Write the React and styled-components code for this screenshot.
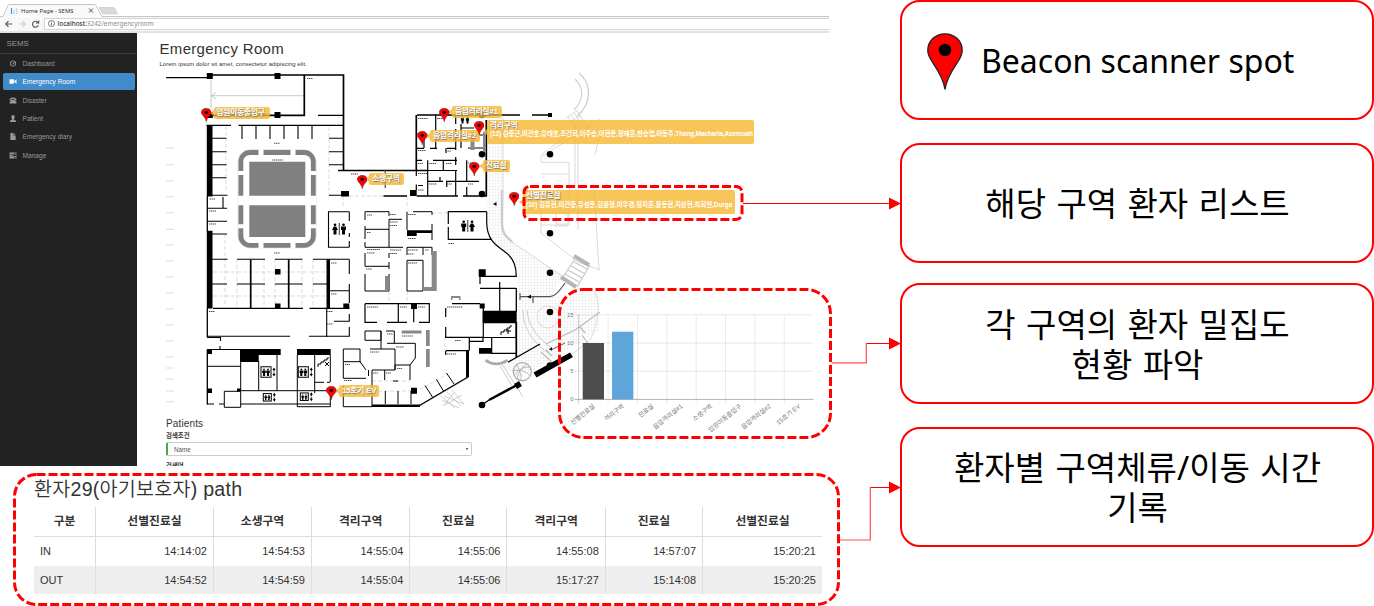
import React from "react";
import styled, { createGlobalStyle } from "styled-components";

const Global = createGlobalStyle`
  * { box-sizing: border-box; }
  body { margin: 0; background: #fff; overflow: hidden; }
`;

const SANS = `"Liberation Sans", "Noto Sans CJK KR", sans-serif`;
const UI = `"Noto Sans", "Noto Sans CJK KR", sans-serif`;

const Page = styled.div`
  position: relative;
  display: flex;
  justify-content: space-between;
  width: 1374px;
  height: 606px;
  font-family: ${SANS};
  color: #333;
  white-space: nowrap;
`;

const LeftColumn = styled.div`
  width: 840px;
`;

/* ---------- browser window ---------- */
const Browser = styled.section`
  width: 829px;
  height: 466px;
  overflow: hidden;
`;
const TabStrip = styled.div`
  height: 17px;
  svg { display: block; }
`;
const Toolbar = styled.div`
  display: flex;
  align-items: center;
  height: 16px;
  padding: 0 0 1px 4px;
  background: #f7f7f7;
  border-bottom: 2px solid #e3e3e3;
`;
const NavButtons = styled.div`
  width: 40px;
  svg { display: block; }
`;
const AddressBar = styled.div`
  display: flex;
  align-items: center;
  flex: 1;
  height: 12px;
  padding-left: 3px;
  gap: 2.5px;
  border: 1px solid #d4d4d4;
  border-right: 0;
  border-radius: 2px 0 0 2px;
  background: #fff;
  font: 6.4px/10px ${UI};
  color: #8a8a8a;
  b { font-weight: 500; color: #333; }
`;
const Body = styled.div`
  display: flex;
  height: 433px;
`;

const Sidebar = styled.nav`
  width: 137px;
  background: #222;
`;
const Brand = styled.div`
  height: 21px;
  padding: 1px 0 0 6.5px;
  border-bottom: 1px solid #3a3a3a;
  font-size: 7.8px;
  line-height: 19px;
  color: #999;
`;
const NavList = styled.div`
  display: flex;
  flex-direction: column;
  gap: 1.9px;
  padding: 1px 2px 0 2.5px;
`;
const NavItem = styled.div`
  display: flex;
  align-items: center;
  gap: 5.5px;
  height: 16.5px;
  padding-left: 6.5px;
  border-radius: 2px;
  font-size: 6.6px;
  color: ${(p) => (p.$active ? "#fff" : "#999")};
  background: ${(p) => (p.$active ? "#428bca" : "transparent")};
  svg { width: 8px; height: 7px; fill: currentColor; stroke: none; }
`;

const Main = styled.main`
  width: 692px;
  padding-left: 22.5px;
`;
const Heading = styled.h1`
  height: 26px;
  margin: 0;
  padding-top: 7px;
  font-weight: 400;
  font-size: 15px;
  line-height: 18px;
  letter-spacing: 0.32px;
`;
const Lead = styled.p`
  height: 11px;
  margin: 0;
  font-size: 5.9px;
  line-height: 11px;
  letter-spacing: 0.07px;
`;

const MapCanvas = styled.div`
  position: relative;
  height: 340px;
  margin-left: 0.5px;
`;
const Plan = styled.svg`
  display: block;
`;
const PinSpot = styled.div`
  position: absolute;
  left: ${(p) => p.$x - 160 - 5.2}px;
  top: ${(p) => p.$y - 70}px;
  line-height: 0;
`;
const ZoneTag = styled.div`
  position: absolute;
  left: ${(p) => p.$x - 160}px;
  top: ${(p) => p.$y - 70}px;
  width: ${(p) => p.$w}px;
  height: ${(p) => p.$h || 12}px;
  padding-left: 3px;
  border-radius: 2px;
  background: rgba(246, 183, 48, 0.8);
  font: 700 7.5px/11.5px ${SANS};
  color: #fff;
  text-shadow: 0.6px 0.8px 1px #777;
  &::before {
    content: "";
    position: absolute;
    left: -4px;
    top: calc(50% - 3px);
    border: solid transparent;
    border-width: 3px 4px 3px 0;
    border-right-color: rgba(246, 183, 48, 0.8);
  }
`;
const PatientNames = styled.div`
  margin-top: -2px;
  font-size: 6.5px;
  line-height: 9px;
  text-shadow: none;
  letter-spacing: ${(p) => p.$spacing}px;
`;
const ChartBox = styled.div`
  position: absolute;
  left: 398px;
  top: 218px;
  svg { display: block; }
`;

const SearchForm = styled.form`
  display: flex;
  flex-direction: column;
  width: 312.5px;
  padding: 7px 0 0 6.5px;
`;
const FormTitle = styled.h2`
  margin: 0;
  font-weight: 400;
  font-size: 10px;
  line-height: 13px;
  letter-spacing: 0.13px;
`;
const Label = styled.label`
  font: 700 6.4px/11px ${SANS};
  padding-top: ${(p) => p.$top || 0}px;
`;
const Select = styled.div`
  display: flex;
  align-items: center;
  justify-content: space-between;
  height: 14px;
  margin-top: 1px;
  padding: 0 3px 0 6px;
  border: 1px solid #ccc;
  border-left: 2px solid #3fae49;
  border-radius: 2px;
  font-size: 6.3px;
  color: #555;
`;
const Caret = styled.i`
  border: solid transparent;
  border-width: 2.5px 1.5px 0;
  border-top-color: #222;
`;

/* ---------- patient path ---------- */
const PathPanel = styled.section`
  width: 788px;
  margin: 10px 0 0 34px;
`;
const PathTitle = styled.h2`
  height: 31px;
  margin: 0;
  font-weight: 350;
  font-size: 19.6px;
  line-height: 26px;
  letter-spacing: 0.23px;
`;
const PathTable = styled.table`
  width: 788px;
  table-layout: fixed;
  border-collapse: separate;
  border-spacing: 0;
  font-size: 11px;
  th, td { padding: 0 6px; border-right: 1px solid #ddd; }
  th:last-child, td:last-child { border-right: 0; }
  th { height: 30px; padding-bottom: 5px; border-bottom: 1.5px solid #ddd; font-size: 11.8px; }
  td { height: 28.7px; text-align: right; }
  td:first-child { text-align: left; }
`;
const Row = styled.tr`
  background: ${(p) => (p.$striped ? "#eee" : "#fff")};
`;

/* ---------- callouts ---------- */
const Callouts = styled.aside`
  display: grid;
  grid-template-rows: 120px 120px 121px 120px;
  row-gap: 23px;
  width: 474px;
  align-content: start;
`;
const Callout = styled.div`
  display: flex;
  align-items: center;
  justify-content: ${(p) => (p.$left ? "flex-start" : "center")};
  gap: 18px;
  padding: 2px 0 0 ${(p) => (p.$left ? 25 : 1)}px;
  margin-top: ${(p) => p.$shift || 0}px;
  margin-bottom: ${(p) => -(p.$shift || 0)}px;
  border: 2px solid #f00;
  border-radius: 20px;
  font: 400 ${(p) => (p.$left ? 32 : 33)}px/40px ${UI};
  word-spacing: ${(p) => (p.$left ? 0 : 1.8)}px;
  text-align: center;
  color: #000;
`;
const Annotations = styled.svg`
  position: absolute;
  left: 0;
  top: 0;
  pointer-events: none;
`;

function Pin({ width = 10.5, height = 14 }) {
  return (
    <svg width={width} height={height} viewBox="0 0 36 57" preserveAspectRatio="none">
      <path d="M18 56.5C16.500 45 10 36 5 28.500C2 24 .8 21 .8 17.500C.8 8 8.500 .8 18 .8S35.200 8 35.200 17.500C35.200 21 34 24 31 28.500C26 36 19.500 45 18 56.500Z" fill="#f00" stroke="#222" strokeWidth="1.3" />
      <circle cx="18" cy="17" r="6.200" fill="#000" />
    </svg>
  );
}

function Person({ x, y, s = 1, dress }) {
  return (
    <g transform={`translate(${x} ${y}) scale(${s})`}>
      <circle cx="0" cy="-4.3" r="1.3" />
      <path d={dress ? "M-1.2-2.600H1.200L3 1H1.500V5.400H-1.500V1H-3Z" : "M-2.500-2.600H2.500V1H1.500V5.400H-1.500V1H-2.500Z"} />
    </g>
  );
}

function Lift({ x, y, w = 10, h = 10.500 }) {
  return (
    <g transform={`translate(${x} ${y})`}>
      <rect x={-w / 2} y={-h / 2} width={w} height={h} fill="#fff" stroke="#000" strokeWidth="1" />
      <Person x={-w / 5} y={0.3} s={h / 15} />
      <Person x={w / 5} y={0.3} s={h / 15} />
      <path d={`M${w / 2 + 3} -4.500l1.600 2.500h-1.100v1.500h-1v-1.500h-1.100ZM${w / 2 + 3} 4.500l1.600-2.500h-1.100v-1.500h-1v1.500h-1.100Z`} />
    </g>
  );
}

const siteTicks = [148, 164.700, 181, 196.700, 212.700, 229.300, 245, 261, 277, 293, 309, 325, 341, 357, 368, 379, 391, 401.700];

const roomCaptions = [
  [307, 78.5, 6], [274, 143.3, 6], [272, 160, 11], [351, 174, 7], [209.500, 199, 6], [209, 211, 7], [209, 224, 7],
  [274, 253, 6], [331, 263, 6], [331, 294, 6], [327, 311.500, 6], [327, 324, 6], [209, 311.500, 6],
  [367, 215, 5], [367, 232.500, 4], [367, 249.500, 13], [367, 253, 8], [366, 269, 6], [390, 214.500, 6], [390, 222, 8], [390, 225.500, 7],
  [408, 214.500, 8], [408, 238.500, 8], [390, 250, 11], [390, 253.500, 7], [408, 250, 10], [408, 254, 6], [425, 250, 4], [408, 263, 9],
  [367, 307, 11], [400, 307, 7], [418, 307, 7], [447, 307, 16], [387, 334, 6], [402, 336, 11], [396, 347, 8], [370, 352, 9],
  [447, 354, 9], [455, 340.500, 6], [345, 364.500, 5], [344, 380.500, 8], [373, 373, 5], [386, 373, 5], [397, 368.500, 5],
  [418, 118.500, 10], [437, 118.500, 7], [418, 150.500, 8], [418, 163.500, 5], [429, 163.500, 7], [446, 163.500, 6], [446, 151, 5],
  [418, 173.500, 9], [429, 184, 8], [447, 184, 5], [468, 163, 6], [468, 184, 5], [448.500, 243.500, 6], [418, 190, 6],
];

function FloorPlan() {
  return (
    <Plan width="440" height="340" viewBox="160 70 440 340">
      <defs>
        <pattern id="paving" width="3" height="3" patternUnits="userSpaceOnUse">
          <path d="M0 0H3M0 0V3" stroke="#e2e2e2" strokeWidth=".7" fill="none" />
        </pattern>
      </defs>

      {/* paving and outdoor area */}
      <path d="M487 118H503V225Q504 236 514 243L563 275L552 296L600 290V330L520 378L500 365L517 355V277Q516 264 506 254Q487 240 487 226Z" fill="url(#paving)" />
      <g fill="none" stroke="#dadada" strokeWidth="1">
        <path d="M502 190V222C502 236 507 236 512 242" stroke="#ccc" strokeWidth="2.500" />
        <path d="M503 117V205M512 242L562 276M541 162.300H569V225H541V210M541 174H569M541 202H569M541 162V157L600 119M541 155L573 131M575 125V190M578 125V230M541 225V233L578 262L600 270" />
        <path d="M568 117l17 26M571 115l17 26M574 113l16 24M577 111l13 20M566 118l12-8M569 123l12-8M573 129l12-8M577 136l12-8M600 133L595 155M594 190L599 270" />
        <path d="M575 79C584 88 584 99 574 110M579 73C592 84 592 104 577 116" stroke="#d0d0d0" strokeWidth="1.300" />
        <path d="M554 226h14M556 212h12v12h-12Z" />
        <path d="M523 310C523 328 532 342 551 355M527 310C528 325 537 338 553 349M500 366L512 386M502 364L523 397" stroke="#ccc" />
        <circle cx="548" cy="317" r="11" />
        <path d="M420 406l48-28M440 395l15 13M452 390l12 14M447 392l14 14" stroke="#d5d5d5" />
        <path d="M594 291C600 300 600 320 590 340L572 354" />
      </g>
      <g fill="none" stroke="#aaa" strokeWidth="1.200">
        <path d="M561 277l15 10M574 256l15 9" stroke="#b5b5b5" strokeWidth="4" />
        <path d="M565 274l14 8M568 270l14 8M571 266l14 8M574 262l13 7M563 277L576 257M577 287L590 265" stroke="#c9c9c9" />
        <path d="M520 293V300M520 296.700H550C556 296 560 290 565 283M533 297v6M528 296.700h9" stroke="#555" />
        <path d="M546 344L575 330L600 312M582 335L589 345M546 350l6 6M541 352L553 363M585 333l-5-6" stroke="#bbb" />
        <path d="M551 350l14-7" stroke="#777" />
        <circle cx="522.300" cy="371.700" r="9" />
        <path d="M514 376q6-10 16-9M516 364q6 9 5 16M512 371q12-3 18 5M527 364q-9 5-10 16" strokeWidth=".8" />
      </g>
      <path d="M442 400l17 8M444 396l20 8M445 405l17-10M455 392l-12 14" stroke="#bbb" strokeWidth=".7" />
      <path d="M486 359Q496 366 507 359L508 361.500Q496 369 485 361.500Z" fill="#aaa" />

      {/* light guide lines */}
      <path d={siteTicks.map((y) => `M166 ${y}h8`).join("")} stroke="#ddd" strokeWidth="1" />
      <path d="M211 80V108M211 95.700H304M216 92.500l-5 3.200l5 3.200" stroke="#bbb" strokeWidth=".8" fill="none" />
      <path d="M226 126V192M329 127V196M225 234V306M237 259V308M264 259V308M275 259V308M302 259V308M313 259V308M213 272H327M213 296H327M343 196H383M343 196V208M407 196V208M372 381H410M445 337V350M432 213H448M372 391H417L446 375M389 291V303M407 291V303" stroke="#ccc" strokeWidth=".7" strokeDasharray="4 2" fill="none" />

      {/* parking court */}
      <rect x="238" y="149.800" width="78" height="98" rx="12" fill="none" stroke="#ddd" strokeWidth="1" />
      <rect x="240.900" y="152.500" width="72.400" height="92.800" rx="9" fill="none" stroke="#808080" strokeWidth="4.800" />
      <path d="M258.500 149.500v6h5v-6ZM290.500 149.500v6h5v-6ZM258.500 242.500v6h5v-6ZM290.500 242.500v6h5v-6ZM238 171h6v4h-6ZM310 171h6v4h-6ZM238 195.700h6v9.500h-6ZM310 195.700h6v9.500h-6ZM238 224.300h6v4h-6ZM310 224.300h6v4h-6Z" fill="#fff" />
      <path d="M249.300 161.700H305.300V195.700H249.300ZM249.300 205.300H305.300V237H249.300Z" fill="#808080" />

      {/* heavy walls and columns */}
      <path d="M206.800 73h6v6h-6ZM274.500 73h6v6h-6ZM206.800 112h6v6h-6ZM274.500 112h6v6h-6ZM206.800 125H212.500V196.500H206.800ZM206.800 230.700H212.500V308.500H206.800ZM326.500 259.500H330V308.500H326.500ZM341 191H349V196.500H341ZM275 269h5.500v5.500H275ZM275 303.500h5.500v5.500H275ZM343.300 303.500h6v5h-6ZM240 349H280.700V355H258.700V362H240ZM297 349H330.700V355H297ZM207 349.500h5v4.500h-5ZM207 388.500h5v4.500h-5ZM237 388.500h4v3h-4ZM407 230.300H432V233H416.700V236H407ZM410 190H416.700V196H410ZM478.700 269.300h7v7h-7ZM482.700 310.700H516.700V323.300H482.700ZM479.700 303.500h5v5h-5ZM411 303.700h6v5.300h-6ZM479 348H491.700V353.800H479ZM411 387.700h6v6h-6ZM372 404.500H420V407H372ZM466 350.700H469V377H466ZM548 113h4v4h-4ZM514 384l5-3l3 5l-5 3ZM533.500 372.500L570 352.500L573 357L536.500 377.500Z" />
      <g>
        {[[550, 233.300], [550, 272.700], [550, 312], [550, 365.500], [482, 405], [482, 154.300], [550, 154.300], [482, 194], [550, 194], [482, 115]].map(([cx, cy]) => (
          <circle key={`${cx}-${cy}`} cx={cx} cy={cy} r="3.300" />
        ))}
        <path d="M493 204l3.500-2v4ZM549 349.500l3-2.500v3.500ZM527 296.700l4-2v4Z" />
      </g>

      <g fill="none" stroke="#000">
        <path strokeWidth="1.700" d="M209 75H343.500V171M304.300 75V115.300H213M417 115H520M532 115H550M416.300 115V170.500M250.700 259.500V308.500M288.700 259.500V308.500M486.300 120V196M516.300 322V358" />
        <path strokeWidth="1.300" d="M166 77.700H209M318 115.300H343M206.500 125.300H231M238.500 125.300H343.500M338 170.500H427M207.300 196V231M207.300 308V337M207.300 349.500V404.500M383.500 196H407M416.700 196H458M463 196H487M213 308.300H303M309.500 308.300H349.500M516.300 288V312M508 362.300L540 344M482 405L489 400M419 405.700L468.300 376.700M472 276.300" />
        <path strokeWidth="2.500" d="M489 400L517 385" />
        <path strokeWidth="1.100" d="M242 125V139M256 125V139M270 125V139M284 125V139M298 125V139M312 125V139M212 138.300H226.500M212 151.700H226.500M212 164.700H226.500M212 177.700H226.500M212 195.300H227.500M329 138.300H343M329 151.700H343M329 164.700H343M329 195.300H343M207 208.300H227M207 221.300H227M207 234H227M223 197V208" />
        <path strokeWidth="1.100" d="M349.300 211.700H328.500V247.300H349.300M349.300 211.700V221M349.300 233V237M349.300 241V247.300M212 259.300H227.500M237 259.300H265M275 259.300H302.500M313 259.300H349.300M212 284H227M237 284H265M275 284H302.500M313 284H330M330 290.700H349.300M349.300 259.500V274M349.300 284V303M326.700 308V337M309 336.300H349.300V327M334 321.300H349.300V314M207 336.300H290M207 337.500H220.500V341M207 349.500H243M220 346V350" />
        <path strokeWidth="1" d="M207 366.300H240.700M240.700 361V377M240.700 377V390M258.700 361V390.700M277 355V390.700M297.300 355V407M314.700 355V393M330.300 355V382M240.700 390.700H330.500M224.300 391.300H240.700V407.300H224.300ZM240.700 404H330.300M297.500 406.700H330.300V391M314.700 382.300H324M327 382.300H330M207 404H214M219 404H224" />
        <path strokeWidth="1" d="M343.300 361.700V349H360V361.700L366 370M343.300 361.700H360.700M343.300 361.700V378.300H366M343.300 386V406.700H372V370M368.500 370V376" />
        <path strokeWidth="1" d="M365 220V211.700H389V216M389 219.300H402M389 219.300V247.300M365 229.300H389M365 226V239M365 242V247.300H403M407 211.700V230M413 211.700H432V215M432 224V240M407 247.300H432V255M407 247.300V255M423 247.300V255M407 260.300H423V291H407ZM365 253V266.300H389M389 262V269M389 253V258M365 274V291H389V274" />
        <path strokeWidth="1.200" d="M448.300 224V211.700H486.700M448.300 227V239.300H491M486.700 211.700V222C486.700 243 500 247 506.700 253.300C513 258 516.300 266 516.300 276.300H479M480 288.300H516.300M499.700 282V311M480 276V284" />
        <path strokeWidth="1.200" d="M365 303.700H429.300V322.300H419M365 303.700V322.300H377M387 322.300H407M398.300 303.700V322.300M413.700 308V322.300M452 303.700H480M445.700 308V317M445.700 327V337.300H483.300V308M516.300 322V337.500H483M491.700 337V353.300H516M469.300 337V350.700M446 350.700H469M445.700 350.700V355M469.300 341.300H483V337" />
        <path strokeWidth="1" d="M365 331H381V340.300H365ZM381 331V349M386 331H394.300V343.300M387 343.300H415.300V358L410 365H395M370 349H395V370H372M395 365V370M410 365V380M384.700 370V380M385.300 391V404M398 391V404M411 391V404M393 381H398M425 385.500L432.500 397M436.500 379.500L443.500 391M446.500 373L454 384" />
        <path strokeWidth="1.200" d="M435.700 115V148.500M416.300 148.300H424M430 148.300H437M447 148.300H456M455.700 115V124M455.700 129V150M424 139V148M446 148V153M455.700 157V165M416.300 160.300H422M433 160.300H457M427.700 160.300V196M416.300 170.500H457M443.300 160.300V171M440 177V181M428 181.300H443M446 181.300H479M455.700 171V196M446.700 181.300V187M466.700 160.300V182M466.700 187V196M461 124V148M461 128H474M416.300 171V176M416.300 184.500V190M418 185.500H423M479 128V135H486M468 148H486" />
        <path stroke="#666" strokeWidth="1.500" d="M385.300 170.500V188" />
      </g>

      <path d="M431.700 251H436.700V291H423V287H431.700ZM401.700 330.500H421.500V333.500H401.700ZM426 330H429.700V346H426ZM426 349H429.700V367H426ZM470.500 132H474.500V150H470.500ZM483 132H486V152H483ZM385 276H388.500V291H385ZM451 296H460.500V300H459V298H452.500V300H451Z" fill="#888" />

      {/* lifts, stairs and toilets */}
      <Lift x={266} y={372} />
      <Lift x={303.300} y={372} />
      <Lift x={267.300} y={397.300} w={8} h={7.500} />
      <Lift x={304.300} y={396.700} w={8} h={7.500} />
      <path d="M318 367v-3h3v-2h3v-2h3v-2h2M325 362l4 4M329 362l-4 4M501 335v-3h3v-2h3v-2h3v-2h2M508 329v5M506 331h5" fill="none" stroke="#000" strokeWidth="1" />
      <Person x={335} y={229} dress />
      <Person x={343.500} y={229} />
      <Person x={463.700} y={226} />
      <Person x={472} y={226} dress />
      <Person x={462.500} y={120} s={0.65} />
      <Person x={467.500} y={120} s={0.65} />
      <path d="M339.300 223V235M467.800 220V232" stroke="#000" strokeWidth=".8" />

      {/* room caption marks */}
      <path d={roomCaptions.map(([x, y, w]) => `M${x} ${y}h${w}`).join("")} stroke="#555" strokeWidth="1.100" strokeDasharray="1.500 .5" />
    </Plan>
  );
}

const zones = [
  { pin: [205.700, 107.500], tag: [213.500, 106.500, 56], name: "입원이동출입구" },
  { pin: [444.300, 107.500], tag: [452, 106, 50], name: "음압격리실#1" },
  { pin: [422.300, 131.300], tag: [430.300, 129.700, 50], name: "음압격리실#2" },
  { pin: [479, 121.300], tag: [487, 119.500, 267, 24], name: "격리구역", names: "(12) 김중근,이건호,유태호,조건희,이주승,이현준,정재훈,한승엽,이동주,Thang,Macharia,Asemoah", spacing: -0.14 },
  { pin: [474.300, 161.500], tag: [483, 160, 26.500], name: "진료실" },
  { pin: [361.700, 174.800], tag: [369.300, 173.300, 34.500], name: "소생구역" },
  { pin: [513.700, 192], tag: [523, 190, 211.500, 24], name: "선별진료실", names: "(10) 김유현,이건중,유성준,김윤정,이우경,정지훈,윤동현,지상현,최희연,Durga", spacing: -0.08 },
  { pin: [331.300, 386.300], tag: [339, 385.200, 39.500], name: "15호기 EV" },
];

const chartData = [
  ["선별진료실", 10, "#4d4d4d"], ["격리구역", 12, "#5da5da"], ["진료실", 0], ["음압격리실#1", 0],
  ["소생구역", 0], ["입원이동출입구", 0], ["음압격리실#2", 0], ["15호기 EV", 0],
];

function DensityChart() {
  const x0 = 20.700, step = 29.370, base = 111.400, unit = 5.640;
  return (
    <ChartBox>
      <svg width="273" height="150" fontFamily="Liberation Sans, Noto Sans CJK KR, sans-serif" fontSize="6.300" fill="#777">
        {[0, 5, 10, 15].map((v) => (
          <g key={v}>
            <path d={`M${x0 - 4} ${base - v * unit}H255.500`} stroke={v ? "rgba(0,0,0,.09)" : "rgba(0,0,0,.3)"} />
            <text x={x0 - 5} y={base - v * unit + 2} textAnchor="end" fontSize="6">{v}</text>
          </g>
        ))}
        {chartData.map(([name, value, color], i) => (
          <g key={name}>
            <path d={`M${x0 + i * step} 26.700V115.500`} stroke={i ? "rgba(0,0,0,.08)" : "rgba(0,0,0,.2)"} />
            {value > 0 && <rect x={x0 + i * step + 4} y={base - value * unit} width="21.300" height={value * unit} fill={color} />}
            <text textAnchor="end" transform={`translate(${x0 + i * step + 16.500} 119) rotate(-39)`}>{name}</text>
          </g>
        ))}
      </svg>
    </ChartBox>
  );
}

const menu = [
  ["Dashboard", <path key="i" fillRule="evenodd" d="M8 1a7 7 0 1 0 0 14A7 7 0 0 0 8 1ZM8 3a5 5 0 1 1 0 10A5 5 0 0 1 8 3ZM11 4l1 1-3 5H7V8Z" />],
  ["Emergency Room", <path key="i" d="M0 3H10V13H0ZM11 7l5-4v10l-5-4Z" />],
  ["Disaster", <path key="i" d="M0 6Q1 1 8 1t8 5v2h-4V5H4v3H0ZM5 7h6l5 5v3H0v-3Z" />],
  ["Patient", <path key="i" d="M8 0q4 0 4 4-.5 5-2.500 6l5.500 3v3H1v-3l5.500-3Q4.500 9 4 4 4 0 8 0Z" />],
  ["Emergency diary", <path key="i" d="M2 0h7v6h5v10H2ZM10 0l4 5h-4Z" />],
  ["Manage", <path key="i" fillRule="evenodd" d="M0 1h16v4H0ZM10 2v2h4V2ZM0 6h16v4H0ZM7 7v2h7V7ZM0 11h16v4H0ZM11 12v2h3v-2Z" />],
];

const path = [
  ["구분", "IN", "OUT"],
  ["선별진료실", "14:14:02", "14:54:52"],
  ["소생구역", "14:54:53", "14:54:59"],
  ["격리구역", "14:55:04", "14:55:04"],
  ["진료실", "14:55:06", "14:55:06"],
  ["격리구역", "14:55:08", "15:17:27"],
  ["진료실", "14:57:07", "15:14:08"],
  ["선별진료실", "15:20:21", "15:20:25"],
];
const columnWidths = [62, 118, 98, 98.300, 97.200, 98.300, 97.300, 118.900];

export default function App() {
  return (
    <>
      <Global />
      <Page>
        <LeftColumn>
          <Browser>
            <TabStrip>
              <svg width="829" height="17">
                <path d="M0 16.500H3L8 5.500Q8.500 4.500 10 4.500H94Q95.500 4.500 96 5.500L102 16.500H829" fill="#f9f9f9" stroke="#c6c6c6" />
                <path d="M99 7.500H113Q114.500 7.500 115 8.500L117.500 14H104Q102.500 14 102 13Z" fill="#d9d9d9" stroke="#c6c6c6" strokeWidth=".6" />
                <path d="M11.500 8v6" stroke="#3fa0e0" strokeWidth="1.300" />
                <path d="M14 10v4M16.500 8v6" stroke="#ccdbe6" strokeWidth="1.500" />
                <text x="21" y="12.800" fontFamily="Noto Sans" fontSize="5.950" fill="#333">Home Page - SEMS</text>
                <path d="M89 8.500l4 4M93 8.500l-4 4" stroke="#444" strokeWidth=".9" />
              </svg>
            </TabStrip>
            <Toolbar>
              <NavButtons>
                <svg width="40" height="12" fill="none" stroke="#555" strokeWidth="1.100">
                  <path d="M8 6H2M4.500 3.200L1.700 6l2.800 2.800" />
                  <path d="M15 6h6M18.500 3.200L21.300 6l-2.800 2.800" stroke="#ccc" />
                  <path d="M34 4.500A3 3 0 1 0 34.300 7.300M34.700 2.500V5H32" />
                </svg>
              </NavButtons>
              <AddressBar>
                <svg width="7" height="7" viewBox="0 0 7 7" fill="none" stroke="#555" strokeWidth=".8">
                  <circle cx="3.500" cy="3.500" r="3" /><path d="M3.500 3v2.300M3.500 1.500v.8" />
                </svg>
                <span><b>localhost</b>:3242/emergencyroom</span>
              </AddressBar>
            </Toolbar>
            <Body>
              <Sidebar>
                <Brand>SEMS</Brand>
                <NavList>
                  {menu.map(([name, icon]) => (
                    <NavItem key={name} $active={name === "Emergency Room"}>
                      <svg viewBox="0 0 16 16">{icon}</svg>
                      {name}
                    </NavItem>
                  ))}
                </NavList>
              </Sidebar>
              <Main>
                <Heading>Emergency Room</Heading>
                <Lead>Lorem ipsum dolor sit amet, consectetur adipiscing elit.</Lead>
                <MapCanvas>
                  <FloorPlan />
                  <DensityChart />
                  {zones.map(({ pin, tag, name, names, spacing }) => (
                    <React.Fragment key={name}>
                      <ZoneTag $x={tag[0]} $y={tag[1]} $w={tag[2]} $h={tag[3]}>
                        {name}
                        {names && <PatientNames $spacing={spacing}>{names}</PatientNames>}
                      </ZoneTag>
                      <PinSpot $x={pin[0]} $y={pin[1]}><Pin /></PinSpot>
                    </React.Fragment>
                  ))}
                </MapCanvas>
                <SearchForm>
                  <FormTitle>Patients</FormTitle>
                  <Label>검색조건</Label>
                  <Select>Name<Caret /></Select>
                  <Label $top={3.500}>검색어</Label>
                </SearchForm>
              </Main>
            </Body>
          </Browser>

          <PathPanel>
            <PathTitle>환자29(아기보호자) path</PathTitle>
            <PathTable>
              <colgroup>{columnWidths.map((w, i) => <col key={i} width={w} />)}</colgroup>
              <thead><tr>{path.map((c, i) => <th key={i}>{c[0]}</th>)}</tr></thead>
              <tbody>
                <Row>{path.map((c, i) => <td key={i}>{c[1]}</td>)}</Row>
                <Row $striped>{path.map((c, i) => <td key={i}>{c[2]}</td>)}</Row>
              </tbody>
            </PathTable>
          </PathPanel>
        </LeftColumn>

        <Callouts>
          <Callout $left><Pin width={36} height={57} />Beacon scanner spot</Callout>
          <Callout>해당 구역 환자 리스트</Callout>
          <Callout $shift={-3}>각 구역의 환자 밀집도<br />현황 파악</Callout>
          <Callout $shift={-3}>환자별 구역체류/이동 시간<br />기록</Callout>
        </Callouts>

        <Annotations width="1374" height="606" fill="none" stroke="#f00">
          <g strokeWidth="3" strokeDasharray="9 3">
            <rect x="524" y="186.500" width="218" height="33" rx="6" />
            <rect x="559.500" y="289.500" width="271" height="148" rx="24" />
            <rect x="14.500" y="474.500" width="824" height="130" rx="22" />
          </g>
          <path d="M743 203.500H890M866.500 343.500H890M870.500 487.500H890" />
          <path d="M832 362.800H866.300V343M840 540H870.300V487" strokeWidth="1.200" stroke="#ff5050" />
          <path d="M889 197.500L901 203.500L889 209.500ZM889 337.500L901 343.500L889 349.500ZM889 481.500L901 487.500L889 493.500Z" fill="#f00" stroke="none" />
        </Annotations>
      </Page>
    </>
  );
}
